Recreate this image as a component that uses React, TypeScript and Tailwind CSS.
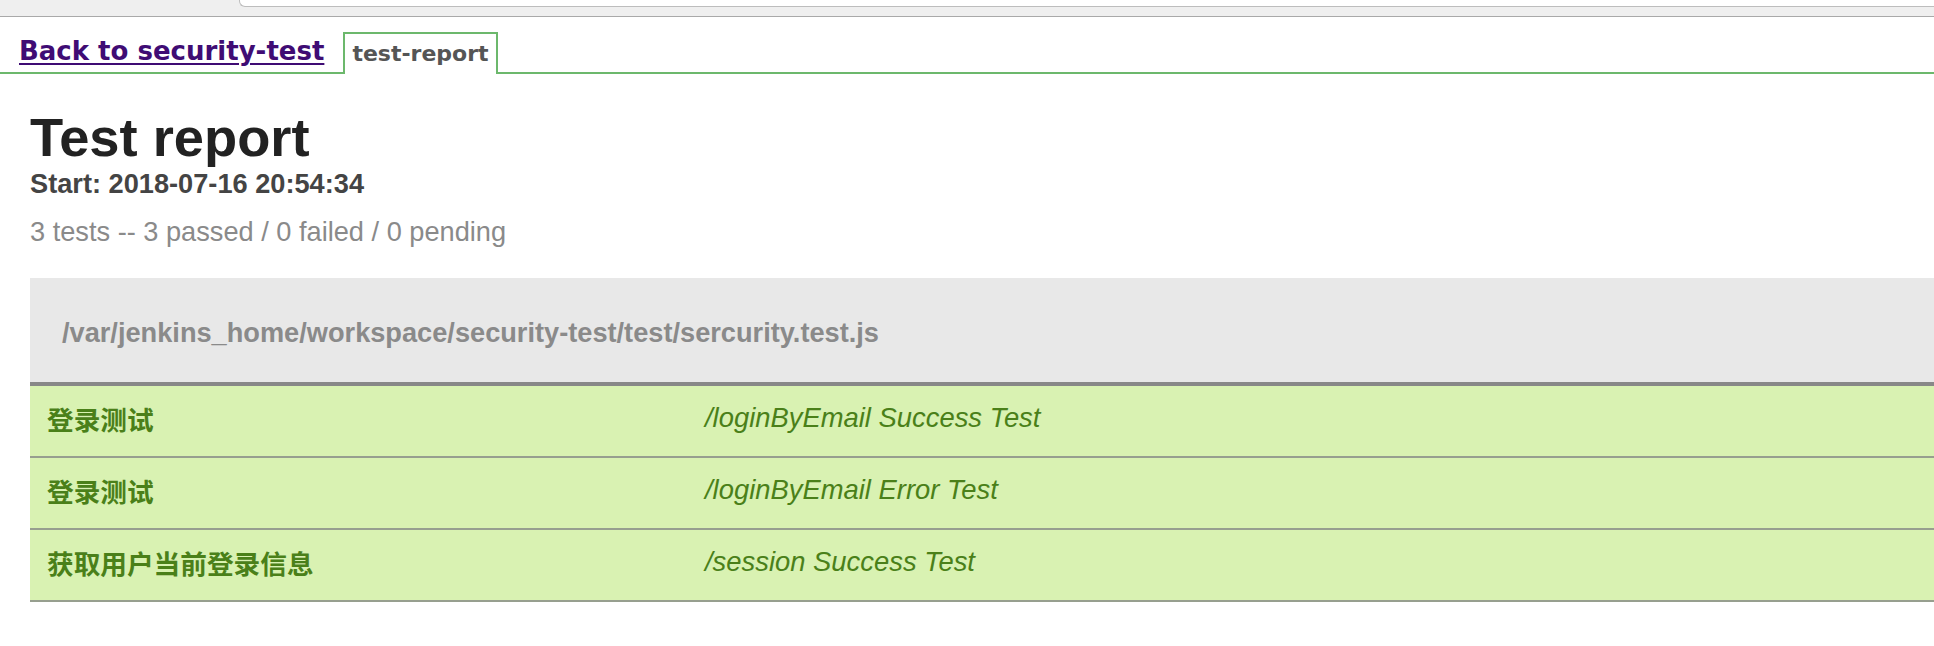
const tests = [
  { suite: '登录测试', title: '/loginByEmail Success Test' },
  { suite: '登录测试', title: '/loginByEmail Error Test' },
  { suite: '获取用户当前登录信息', title: '/session Success Test' },
];

const sans = "font-['Liberation_Sans','Noto_Sans_CJK_SC',sans-serif]";

export default function App() {
  return (
    <div className="min-h-screen bg-white overflow-hidden">
      {/* browser toolbar strip */}
      <div className="flex h-[17px] items-start border-b border-[#a9a9a9] bg-[#efefef]">
        <div className="ml-[239px] h-[7px] flex-1 rounded-bl-[6px] border-b border-l border-[#bdbdbd] bg-white" />
      </div>

      {/* html publisher tabs */}
      <div className="flex h-[57px] items-start border-b-2 border-[#6cb86c] pl-[19px] font-['DejaVu_Sans',sans-serif] font-bold">
        <a href="#" className="mt-[19px] text-[26px] leading-[30px] text-[#3f0c74] underline decoration-2 underline-offset-[3px]">
          Back to security-test
        </a>
        <div className="relative ml-[19px] mt-[15px] h-[42px] border-2 border-b-0 border-[#6cb86c] bg-white px-[7px] pt-[7px] text-[22px] leading-[26px] text-[#555555]">
          test-report
        </div>
      </div>

      <div className={`pl-[30px] ${sans}`}>
        <h1 className="mt-[36px] text-[54.3px] font-bold leading-[56px] text-[#222222]">Test report</h1>
        <div className="mt-[3px] text-[27.2px] font-bold leading-[30px] text-[#444444]">Start: 2018-07-16 20:54:34</div>
        <div className="mt-[18px] text-[27.2px] leading-[30px] text-[#8a8a8a]">
          3 tests -- 3 passed / 0 failed / 0 pending
        </div>

        <div className="mt-[31px]">
          <div className="flex h-[108px] items-center border-b-4 border-[#888888] bg-[#e8e8e8] pl-[32px] pt-[5px] text-[27.2px] font-bold leading-[30px] text-[#8a8a8a]">
            /var/jenkins_home/workspace/security-test/test/sercurity.test.js
          </div>
          {tests.map((t, i) => (
            <div
              key={i}
              className="flex h-[72px] items-center border-b-2 border-[#979f8f] bg-[#d9f2b2] leading-[30px] text-[#4a8019]"
            >
              <div className="w-[675px] shrink-0 pl-[17px] text-[26.67px] font-bold">{t.suite}</div>
              <div className="pb-[6px] text-[27.4px] italic">{t.title}</div>
            </div>
          ))}
        </div>
      </div>
    </div>
  );
}
